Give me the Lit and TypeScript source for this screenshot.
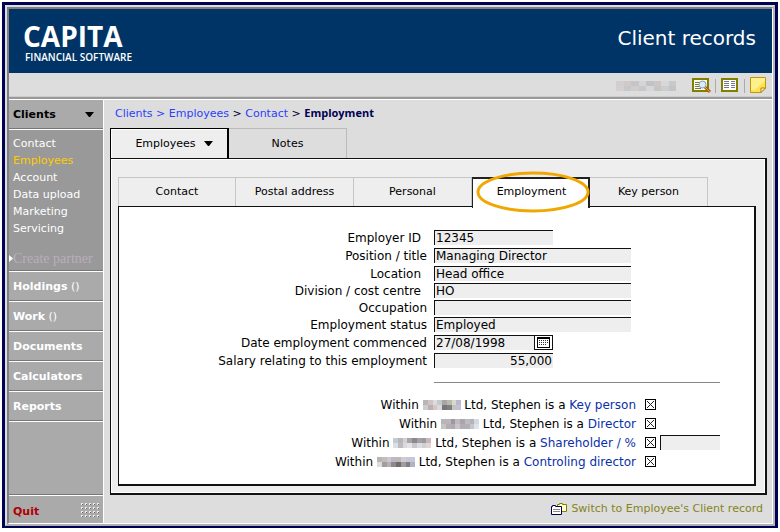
import { LitElement, html, svg, css } from "lit";
import { customElement, property } from "lit/decorators.js";
import { classMap } from "lit/directives/class-map.js";

type Field = { id: string; label: string; value: string; indent?: boolean; short?: boolean; right?: boolean; calendar?: boolean };

const FIELDS: Field[] = [
  { id: "employer", label: "Employer ID", value: "12345", indent: true, short: true },
  { id: "position", label: "Position / title", value: "Managing Director" },
  { id: "location", label: "Location", value: "Head office", indent: true },
  { id: "division", label: "Division / cost centre", value: "HO", indent: true },
  { id: "occupation", label: "Occupation", value: "" },
  { id: "status", label: "Employment status", value: "Employed" },
  { id: "commenced", label: "Date employment commenced", value: "27/08/1998", short: true, calendar: true },
  { id: "salary", label: "Salary relating to this employment", value: "55,000", short: true, right: true },
];

const ROLES = [
  { id: "key", link: "Key person", tone: 0 },
  { id: "director", link: "Director", tone: 1 },
  { id: "shareholder", link: "Shareholder / %", tone: 2, percent: true },
  { id: "controlling", link: "Controling director", tone: 3 },
];

const TONES = [
  ["#b9b6b8", "#d0c4c6", "#dcdce0", "#c6c9cc", "#a7a6a6", "#bcbab0", "#d6d9cc", "#b9b8cc",
   "#cfcccc", "#bdb0b4", "#d8c6c6", "#d9dadd", "#77777a", "#808080", "#c4c4c4", "#c4c0d6"],
  ["#b8b6b8", "#c0b4bc", "#9c98a4", "#bcbcc0", "#a8a4b0", "#c0bcbc", "#b0b4c0", "#d4d8e4",
   "#c8c4c0", "#b4b0b0", "#b0a8b8", "#c8c4c8", "#b4acb0", "#b0b0b8", "#c8c4c8", "#dce4ec"],
  ["#c4ccd0", "#b4b8bc", "#d4d0d4", "#a8a4a8", "#8c888c", "#a4a0a4", "#989ca0", "#c8b8bc",
   "#dce0e4", "#bcbcc0", "#dcd8dc", "#e4e4e8", "#c8c8cc", "#dcdce0", "#d0d0d0", "#e4d4d8"],
  ["#bcb4b4", "#c4bcb8", "#ccc8cc", "#bcb8c8", "#c0b8b8", "#d0ccd4", "#c8c8d4", "#c4c8dc",
   "#e0dcdc", "#a49ca0", "#b4b0b4", "#8c888c", "#706c70", "#a09c9c", "#808084", "#b0b4c0"],
  ["#d0cecf", "#cfc9c8", "#c6c6c8", "#d6d4d4", "#c2c2c6", "#cdc6c4", "#d8d8da", "#c9c9cc",
   "#d4d0d0", "#c8c8c8", "#d2ccca", "#c6c8cc", "#d6d6d6", "#c8c4c4", "#cccdd0", "#c2c4c6"],
];

@customElement("pixel-mask")
class PixelMask extends LitElement {
  @property({ type: Number }) tone = 0;
  static styles = css`
    :host { display: inline-block; width: 38px; height: 10px; vertical-align: -1px; }
    svg { display: block; width: 100%; height: 100%; }
  `;
  render() {
    return html`<svg viewBox="0 0 8 2" preserveAspectRatio="none" shape-rendering="crispEdges" aria-hidden="true">
      ${TONES[this.tone].map((c, i) => svg`<rect x=${i % 8} y=${Math.floor(i / 8)} width="1" height="1" fill=${c} />`)}
    </svg>`;
  }
}

@customElement("app-root")
class AppRoot extends LitElement {
  static styles = css`
    :host { display: block; background: #fff; font: 11px/16px "DejaVu Sans", Verdana, sans-serif; color: #000; }
    * { box-sizing: border-box; }
    a { color: #2a3fff; text-decoration: none; }
    button { font: inherit; color: inherit; background: none; border: 0; padding: 0; cursor: pointer; }
    input { font: inherit; color: inherit; margin: 0; border-radius: 0; }
    svg { display: block; flex: none; }

    .page { padding: 2px 2px 4px 2px; min-height: 100vh; display: flex; }
    .window { flex: 1; min-width: 0; border: 3px solid #000054; border-bottom-width: 2px; display: flex; }
    .bevel { flex: 1; min-width: 0; background: #ddd; border: 2px solid #ddd; border-right-color: #b8b8b8; border-bottom-color: #b0b0b0; display: flex; }
    .inner { flex: 1; min-width: 0; border: solid #808080; border-width: 2px 1px 1px 2px; border-right-color: #fff; border-bottom-color: #fff; display: flex; flex-direction: column; }

    .banner { height: 64px; flex: none; background: #003466; color: #fff; display: flex; justify-content: space-between; padding: 12px 16px 0 14px; }
    .brand { font-family: "Open Sans", "Noto Sans", sans-serif; display: flex; flex-direction: column; }
    .brand-name { font-size: 28px; line-height: 30px; font-weight: 700; }
    .brand-sub { font-size: 10px; line-height: 12px; padding: 0 2px; font-weight: 600; }
    .title { margin: 0; font-size: 20px; line-height: 34px; font-weight: 400; }

    .toolbar { height: 26px; flex: none; border-bottom: 2px solid #999; box-shadow: inset 0 -1px #ccc; display: flex; align-items: center; justify-content: flex-end; gap: 5px; padding: 2px 4px 0 0; }
    .toolbar button { width: 18px; height: 18px; display: flex; }
    .user { width: 60px; height: 10px; margin-right: 11px; }
    .sep { width: 1px; height: 14px; background: #aaa; }

    .body { flex: 1; display: flex; border-top: 1px solid #fff; }
    .side { width: 95px; flex: none; background: #aaa; border-right: 1px solid #fff; color: #fff; display: flex; flex-direction: column; }
    .side-row { height: 30px; flex: none; padding: 0 4px; display: flex; align-items: center; border-bottom: 1px solid #fff; box-shadow: inset 0 -1px #777; font-weight: 700; color: #fff; }
    .side-row span { font-weight: 400; white-space: pre; }
    .current { color: #000; justify-content: space-between; padding-right: 9px; }
    .sub { background: #999; border-bottom: 1px solid #fff; box-shadow: inset 0 -1px #777; height: 142px; flex: none; padding-top: 5px; }
    .sub a { display: block; height: 17px; line-height: 17px; padding-left: 4px; color: #fff; }
    .sub .on { color: #fc0; }
    .sub .faded { display: flex; align-items: center; margin-top: 13px; padding: 0; color: #b9aebb; font-family: "Liberation Serif", serif; font-size: 14px; }
    .quit { margin-top: auto; height: 28px; border-top: 1px solid #fff; box-shadow: 0 -1px #777; padding: 4px 4px 0; display: flex; align-items: center; justify-content: space-between; color: #b00000; font-weight: 700; }

    .main { flex: 1; min-width: 0; padding: 5px 5px 0 6px; display: flex; flex-direction: column; }
    .crumbs { padding-left: 5px; height: 23px; color: #003; }
    .crumbs b { color: #000054; font: 700 11px/16px "Open Sans", sans-serif; }
    .tabs { display: flex; height: 30px; flex: none; align-items: stretch; }
    .tab { width: 118px; display: flex; align-items: center; justify-content: center; gap: 8px; border: 1px solid #bbb; border-left: 0; border-bottom: 0; }
    .outer-on { width: 119px; padding: 0 0 2px 10px; background: #eee; border: 1px solid #000; border-right-width: 2px; border-bottom: 0; box-shadow: inset 1px 1px #fff; margin-bottom: -2px; }
    .panel { flex: 1; background: #eee; border: 1px solid #111; border-right-width: 2px; border-bottom-width: 2px; box-shadow: inset 1px 1px #fff, inset -1px -1px #fff; padding: 18px 9px 7px 7px; display: flex; flex-direction: column; }
    .inner-tabs { height: 29px; }
    .inner-tabs .tab { border-color: #c6c6c6; background: #eee; position: relative; }
    .inner-tabs .tab:first-child { border-left: 1px solid #c6c6c6; }
    .inner-tabs .inner-on { background: #fff; border: 2px solid #222; border-bottom: 0; border-left-width: 1px; margin-bottom: -2px; padding: 0 0 4px 2px; }
    .ring { position: absolute; left: 3px; top: -8px; pointer-events: none; }
    .sheet { flex: 1; background: #fff; border: 1px solid #111; border-right-width: 2px; border-bottom-width: 2px; padding: 23px 0 0 0; font-size: 12px; }

    .fields { display: grid; grid-template-columns: 308px 1fr; column-gap: 7px; grid-template-rows: 18px 18px 17px 17px 17px 18px 18px 17px; }
    .fields label { text-align: right; white-space: nowrap; }
    .indent { padding-right: 6px; }
    .box { width: 197px; height: 15px; display: flex; }
    .short { width: 119px; }
    .box input, .percent { flex: 1; min-width: 0; height: 15px; padding: 0 1px; background: #eee; border: 0 solid #111; border-width: 1px 0 0 1px; }
    .right input { text-align: right; }
    .box button { width: 19px; height: 15px; background: #fff; border: 1px solid #111; display: flex; align-items: center; justify-content: center; }
    hr { width: 286px; margin: 12px 0 12px 315px; border: 0; height: 1px; background: #888; }
    .role { display: grid; grid-template-columns: 522px 11px 60px; column-gap: 4px; align-items: center; height: 19px; }
    .role label { text-align: right; padding-right: 5px; white-space: nowrap; }
    .role a { color: #0a30a8; }
    .role .percent { width: 60px; }
    .tick { appearance: none; width: 11px; height: 11px; border: 1px solid #000; background: #fff; }
    .tick:checked { background: linear-gradient(45deg, transparent 45%, #222 45% 55%, transparent 55%), linear-gradient(135deg, #fff 45%, #222 45% 55%, #fff 55%); box-shadow: inset 0 0 0 1px #fff; }
    .foot { height: 28px; flex: none; display: flex; align-items: center; justify-content: flex-end; padding-right: 4px; }
    .foot a { display: flex; align-items: center; gap: 3px; color: #84841e; }
  `;

  arrow() {
    return html`<svg width="9" height="6" viewBox="0 0 9 6" aria-hidden="true"><path d="M0 0H9L5 5H4Z" fill="#000" /></svg>`;
  }

  render() {
    return html`<div class="page"><div class="window"><div class="bevel"><div class="inner">
      <header class="banner">
        <div class="brand"><span class="brand-name">CAPITA</span><span class="brand-sub">FINANCIAL SOFTWARE</span></div>
        <h1 class="title">Client records</h1>
      </header>
      <div class="toolbar">
        <pixel-mask class="user" tone="4"></pixel-mask>
        <button aria-label="Search records"><svg width="20" height="17" viewBox="0 0 20 17">
          <rect x="1" y="2" width="15" height="12" fill="#ffffe8" stroke="#808000" stroke-width="2" />
          <path d="M3 5.500H8M3 7.500H7M3 9.500H7M3 11.500H9" stroke="#777755" />
          <path d="M13 10L18 15" stroke="#a85a10" stroke-width="3" /><path d="M13 10L18 15" stroke="#f5a020" />
          <circle cx="10.500" cy="7.500" r="3.500" fill="#d8ecfc" stroke="#8899aa" /></svg></button>
        <span class="sep"></span>
        <button aria-label="Record list"><svg width="18" height="17" viewBox="0 0 18 17">
          <rect x="1" y="2" width="15" height="12" fill="#fff" stroke="#808000" stroke-width="2" />
          <path d="M3 4.500H8M3 6.500H8M3 8.500H8M3 10.500H8M10 4.500H14M10 6.500H14M10 8.500H14M10 10.500H14" stroke="#778" /></svg></button>
        <span class="sep"></span>
        <button aria-label="Note"><svg width="17" height="17" viewBox="0 0 17 17">
          <path d="M.5 .5H15.500V11L11 15.500H.5Z" fill="#ffe050" stroke="#c09810" /><path d="M1 1H15V4L5 13H1Z" fill="#fff08a" /><path d="M15.500 11H11V15.500Z" fill="#fff6b8" stroke="#b08010" /></svg></button>
      </div>
      <div class="body">
        <nav class="side">
          <button class="side-row current">Clients ${this.arrow()}</button>
          <div class="sub">
            <a href="#contact">Contact</a><a href="#employees" class="on">Employees</a><a href="#account">Account</a>
            <a href="#upload">Data upload</a><a href="#marketing">Marketing</a><a href="#servicing">Servicing</a>
            <a href="#partner" class="faded"><svg width="4" height="7" viewBox="0 0 4 7"><path d="M0 0L4 3.500L0 7Z" fill="#fff" /></svg>Create partner</a>
          </div>
          <a href="#holdings" class="side-row">Holdings<span> ()</span></a>
          <a href="#work" class="side-row">Work<span> ()</span></a>
          <a href="#documents" class="side-row">Documents</a>
          <a href="#calculators" class="side-row">Calculators</a>
          <a href="#reports" class="side-row">Reports</a>
          <button class="quit">Quit
            <svg width="18" height="17" viewBox="0 0 18 17" shape-rendering="crispEdges">${[0, 1, 2, 3, 4].flatMap((x) => [0, 1, 2, 3].map((y) => svg`<rect x=${x * 4} y=${y * 4} width="2" height="2" fill="#eee" /><rect x=${x * 4 + 1} y=${y * 4 + 1} width="1" height="1" fill="#666" />`))}</svg>
          </button>
        </nav>
        <main class="main">
          <nav class="crumbs"><a href="#clients">Clients</a> <a href="#clients">&gt;</a> <a href="#employees">Employees</a> &gt; <a href="#contact">Contact</a> &gt; <b>Employment</b></nav>
          <div class="tabs"><button class="tab outer-on">Employees ${this.arrow()}</button><button class="tab">Notes</button></div>
          <section class="panel">
            <div class="tabs inner-tabs">
              ${["Contact", "Postal address", "Personal", "Employment", "Key person"].map((t) => html`<button class=${classMap({ tab: true, "inner-on": t === "Employment" })}>${t}${t === "Employment"
                ? html`<svg class="ring" width="114" height="42" viewBox="0 0 114 42"><ellipse cx="57" cy="21" rx="55" ry="19" fill="none" stroke="#f0a800" stroke-width="3" /></svg>` : ""}</button>`)}
            </div>
            <form class="sheet">
              <div class="fields">
                ${FIELDS.map((f) => html`<label for=${f.id} class=${classMap({ indent: !!f.indent })}>${f.label}</label>
                  <div class=${classMap({ box: true, short: !!f.short, right: !!f.right })}><input id=${f.id} type="text" .value=${f.value} />${f.calendar
                    ? html`<button type="button" aria-label="Pick a date"><svg width="13" height="11" viewBox="0 0 13 11" shape-rendering="crispEdges"><rect width="13" height="11" fill="#000" /><rect x="1" y="2" width="11" height="8" fill="#fff" /><path d="M2 3.500H11M2 5.500H11M2 7.500H9" stroke="#333" stroke-dasharray="1 1" /></svg></button>` : ""}</div>`)}
              </div>
              <hr />
              ${ROLES.map((r) => html`<div class="role">
                <label for=${r.id}>Within <pixel-mask .tone=${r.tone}></pixel-mask> Ltd, Stephen is a <a href="#${r.id}">${r.link}</a></label>
                <input class="tick" id=${r.id} type="checkbox" checked />
                ${r.percent ? html`<input class="percent" type="text" aria-label="Shareholding per cent" />` : ""}
              </div>`)}
            </form>
          </section>
          <footer class="foot"><a href="#client-record"><svg width="17" height="13" viewBox="0 0 17 13">
            <path d="M6.500 3V1.500H8.500V.5H11.500V1.500H15.500V8.500H10.500" fill="#ffffd0" stroke="#808000" /><path d="M.5 3.500H1.500V2.500H4.500V3.500H10.500V11.500H.5Z" fill="#fff" stroke="#000054" /><path d="M2 6.500H9M2 8.500H9" stroke="#888" /></svg>Switch to Employee's Client record</a></footer>
        </main>
      </div>
    </div></div></div></div>`;
  }
}
